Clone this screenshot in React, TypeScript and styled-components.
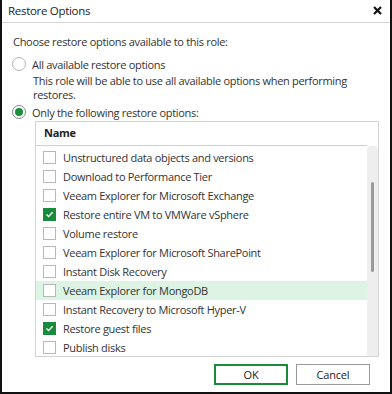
import React from "react";
import styled, { createGlobalStyle } from "styled-components";

const GlobalStyle = createGlobalStyle`
  html, body {
    margin: 0;
    padding: 0;
    background: #ffffff;
  }
  body {
    font-family: "Open Sans", "Noto Sans", sans-serif;
    font-size: 11px;
    letter-spacing: -0.3px;
    color: #333333;
  }
`;

const Window = styled.div`
  box-sizing: border-box;
  width: 392px;
  height: 394px;
  border: 2px solid #111;
  border-top: none;
  background: #fff;
  display: flex;
  flex-direction: column;
`;

const TitleBar = styled.div`
  height: 23px;
  box-sizing: border-box;
  border-bottom: 1px solid #d6d6d6;
  display: flex;
  align-items: center;
  justify-content: space-between;
  padding: 0 6px 2px 6px;
  font-size: 11.5px;
  color: #222;
`;

const CloseButton = styled.span`
  display: flex;
  align-items: center;
  margin-right: 2px;
`;

const Body = styled.div`
  flex: 1;
  display: flex;
  flex-direction: column;
  padding: 12px 10px 0 10px;
`;

const Heading = styled.div`
  height: 14px;
  line-height: 14px;
  margin-bottom: 7px;
  padding-left: 1px;
`;

const RadioRow = styled.label`
  display: flex;
  align-items: center;
  gap: 6px;
  height: 16px;
`;

const RadioCircle = styled.span<{ $checked?: boolean }>`
  box-sizing: border-box;
  width: 14px;
  height: 14px;
  border-radius: 50%;
  border: 1px solid ${(p) => (p.$checked ? "#8a8a8a" : "#b4b4b4")};
  background: #fff;
  display: flex;
  align-items: center;
  justify-content: center;
  &::after {
    content: "";
    display: ${(p) => (p.$checked ? "block" : "none")};
    width: 8px;
    height: 8px;
    border-radius: 50%;
    background: #1a8f3c;
  }
`;

const Description = styled.div`
  padding-left: 21px;
  margin-top: 2px;
  line-height: 14px;
  margin-bottom: 2px;
`;

const Table = styled.div`
  box-sizing: border-box;
  margin: 1px 0 0 23px;
  width: 344px;
  height: 236px;
  border: 1px solid #d4d4d4;
  display: flex;
  flex-direction: column;
  overflow: hidden;
`;

const HeaderRow = styled.div`
  height: 24px;
  box-sizing: border-box;
  flex-shrink: 0;
  display: flex;
  align-items: center;
  padding: 0 0 2px 8px;
  margin-right: 11px;
  border-bottom: 1px solid #d0d0d0;
  font-weight: 700;
  color: #222;
`;

const ListArea = styled.div`
  flex: 1;
  display: flex;
  min-height: 0;
`;

const Rows = styled.div`
  flex: 1;
  padding-top: 2px;
  overflow: hidden;
`;

const Row = styled.div<{ $highlight?: boolean }>`
  height: 19px;
  display: flex;
  align-items: center;
  gap: 7px;
  padding-left: 7px;
  background: ${(p) => (p.$highlight ? "#ddf4e4" : "transparent")};
  white-space: nowrap;
`;

const Checkbox = styled.span<{ $checked?: boolean }>`
  box-sizing: border-box;
  width: 13px;
  height: 13px;
  flex-shrink: 0;
  border: 1px solid ${(p) => (p.$checked ? "#1a8a3c" : "#b8b8b8")};
  background: ${(p) => (p.$checked ? "#1a8a3c" : "#fff")};
  display: flex;
  align-items: center;
  justify-content: center;
`;

const ScrollTrack = styled.div`
  width: 11px;
  flex-shrink: 0;
  background: #eeeeee;
  border-radius: 4px 4px 0 0;
  display: flex;
  justify-content: center;
`;

const ScrollThumb = styled.div`
  width: 3px;
  height: 90px;
  margin-top: 36px;
  border-radius: 2px;
  background: #9a9a9a;
`;

const Footer = styled.div`
  display: flex;
  justify-content: flex-end;
  gap: 8px;
  padding: 7px 10px 0 0;
`;

const Button = styled.button<{ $primary?: boolean }>`
  box-sizing: border-box;
  width: 74px;
  height: 21px;
  font-family: inherit;
  font-size: 11px;
  letter-spacing: -0.2px;
  color: #222;
  background: #fff;
  border: ${(p) => (p.$primary ? "2px solid #1a8a3c" : "1px solid #9a9a9a")};
  padding: 0;
`;

const options = [
  { name: "Unstructured data objects and versions" },
  { name: "Download to Performance Tier" },
  { name: "Veeam Explorer for Microsoft Exchange" },
  { name: "Restore entire VM to VMWare vSphere", checked: true },
  { name: "Volume restore" },
  { name: "Veeam Explorer for Microsoft SharePoint" },
  { name: "Instant Disk Recovery" },
  { name: "Veeam Explorer for MongoDB", highlight: true },
  { name: "Instant Recovery to Microsoft Hyper-V" },
  { name: "Restore guest files", checked: true },
  { name: "Publish disks" },
];

function CheckMark() {
  return (
    <svg width="9" height="9" viewBox="0 0 9 9">
      <path d="M1.5 4.6 L3.6 6.6 L7.6 2.2" fill="none" stroke="#fff" strokeWidth="1.4" />
    </svg>
  );
}

export default function App() {
  return (
    <>
      <GlobalStyle />
      <Window>
        <TitleBar>
          <span>Restore Options</span>
          <CloseButton>
            <svg width="9" height="9" viewBox="0 0 9 9">
              <path d="M1 1 L8 8 M8 1 L1 8" stroke="#111" strokeWidth="2.2" />
            </svg>
          </CloseButton>
        </TitleBar>
        <Body>
          <Heading>Choose restore options available to this role:</Heading>
          <RadioRow>
            <RadioCircle />
            <span>All available restore options</span>
          </RadioRow>
          <Description>
            This role will be able to use all available options when performing restores.
          </Description>
          <RadioRow>
            <RadioCircle $checked />
            <span>Only the following restore options:</span>
          </RadioRow>
          <Table>
            <HeaderRow>Name</HeaderRow>
            <ListArea>
              <Rows>
                {options.map((o) => (
                  <Row key={o.name} $highlight={o.highlight}>
                    <Checkbox $checked={o.checked}>{o.checked && <CheckMark />}</Checkbox>
                    <span>{o.name}</span>
                  </Row>
                ))}
              </Rows>
              <ScrollTrack>
                <ScrollThumb />
              </ScrollTrack>
            </ListArea>
          </Table>
          <Footer>
            <Button $primary>OK</Button>
            <Button>Cancel</Button>
          </Footer>
        </Body>
      </Window>
    </>
  );
}
